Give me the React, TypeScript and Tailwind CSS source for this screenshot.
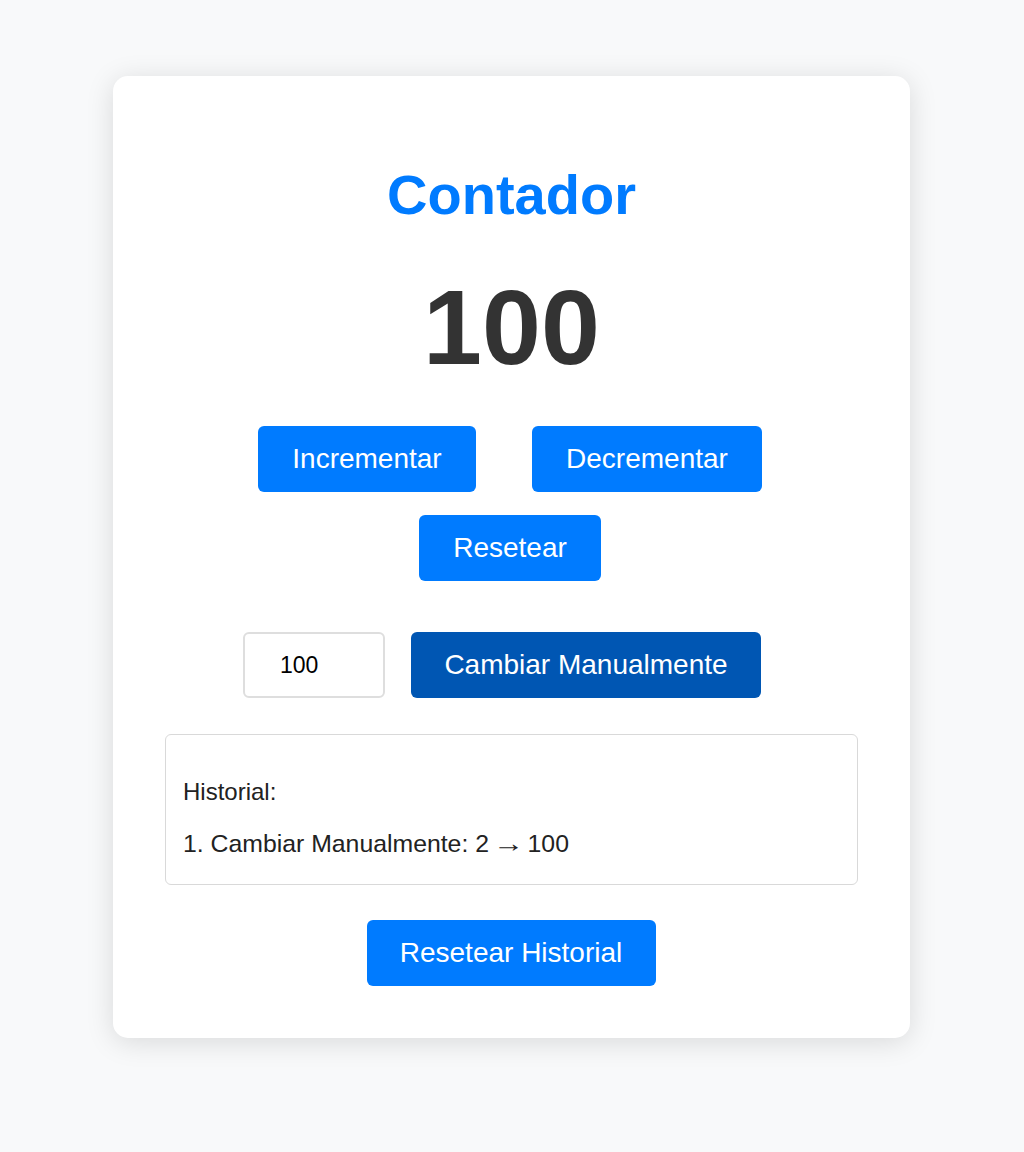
import React from "react";

const btn =
  "h-[66px] px-[34px] flex items-center justify-center rounded-[6px] text-white text-[28px] leading-[32px] whitespace-nowrap";

export default function App() {
  return (
    <div
      className="min-h-[1152px] w-full bg-[#f8f9fa] pt-[76px]"
      style={{ fontFamily: '"Liberation Sans", Arial, sans-serif' }}
    >
      <div className="ml-[113px] w-[797px] h-[962px] bg-white rounded-[15px] shadow-[0_4px_28px_rgba(0,0,0,0.13)] flex flex-col items-center pt-[87px]">
        <h1 className="text-[56px] leading-[64px] font-bold text-[#007bff]">Contador</h1>
        <div className="mt-[36px] text-[106px] leading-[129px] font-bold text-[#333333]">100</div>

        <div className="mt-[34px] flex justify-center gap-[56px] pr-[3px]">
          <button className={`${btn} w-[218px] bg-[#007bff]`}>Incrementar</button>
          <button className={`${btn} w-[230px] bg-[#007bff]`}>Decrementar</button>
        </div>
        <div className="mt-[23px] flex justify-center pr-[3px]">
          <button className={`${btn} w-[182px] bg-[#007bff]`}>Resetear</button>
        </div>

        <div className="mt-[51px] flex justify-center gap-[26px] pr-[19px]">
          <input
            type="text"
            defaultValue="100"
            className="w-[142px] h-[66px] rounded-[6px] border-2 border-[#dedede] pl-[35px] text-[23px] text-black outline-none"
            style={{ fontFamily: '"Liberation Sans", Arial, sans-serif' }}
          />
          <button className={`${btn} w-[350px] bg-[#0056b3]`}>Cambiar Manualmente</button>
        </div>

        <div className="mt-[36px] w-[693px] h-[151px] border border-[#d9d9d9] rounded-[6px] px-[17px] pt-[43px] text-[24px] leading-[28px] text-[#222222]">
          <div>Historial:</div>
          <div className="mt-[24px] text-[24.8px]">
            1. Cambiar Manualmente: 2{" "}
            <span className="inline-block scale-x-[1.25]">→</span> 100
          </div>
        </div>

        <div className="mt-[35px] flex justify-center pr-[1px]">
          <button className={`${btn} w-[289px] bg-[#007bff]`}>Resetear Historial</button>
        </div>
      </div>
    </div>
  );
}
